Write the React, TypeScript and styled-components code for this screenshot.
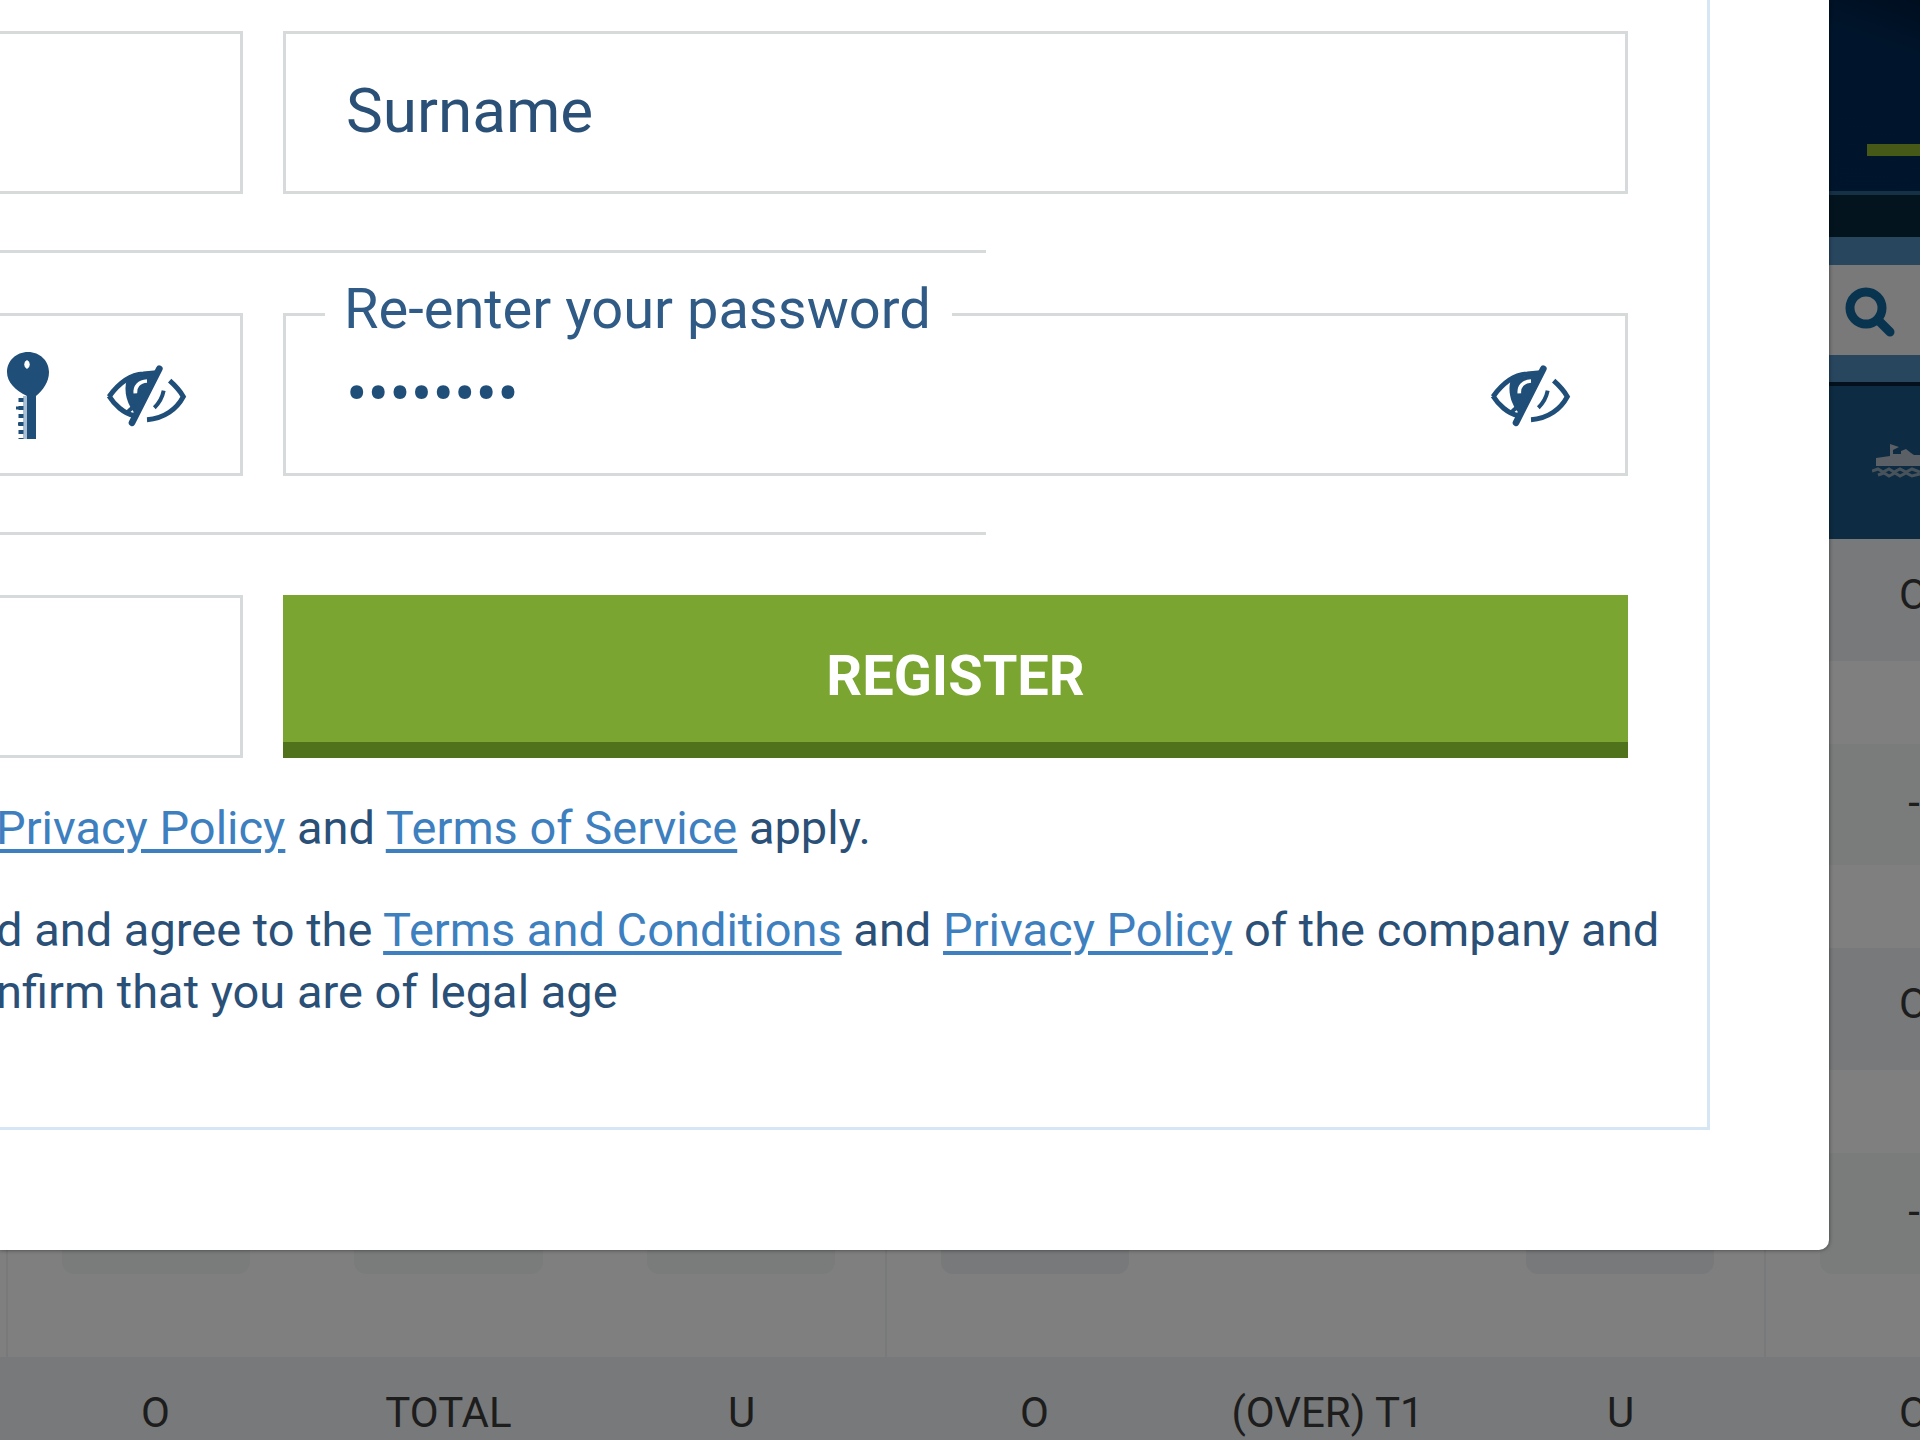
import React, { useState } from "react";
import styled, { createGlobalStyle } from "styled-components";

const color = {
  ink: "#1f4e79",
  body: "#2a5078",
  label: "#2f5b86",
  link: "#3d7fbf",
  line: "#d6dada",
  green: "#7ba531",
  greenDark: "#4f721b",
};

const GlobalStyle = createGlobalStyle`
  *, *::before, *::after { box-sizing: border-box; }
  body {
    margin: 0;
    font-family: Roboto, "Liberation Sans", sans-serif;
    background: #fff;
  }
`;

const Page = styled.div`
  position: relative;
  height: 100vh;
  overflow: hidden;
`;

/* ---------- site behind the dialog ---------- */

const Site = styled.div`
  display: flex;
  flex-direction: column;
`;

const Masthead = styled.header`
  display: flex;
  justify-content: flex-end;
  align-items: flex-end;
  height: 195px;
  padding-bottom: 35px;
  border-bottom: 4px solid #2c628c;
  background: linear-gradient(200deg, #001c40, #002b58 60px, #002d5a);
`;

const ActiveMark = styled.span`
  width: 53px;
  height: 12px;
  background: #8cb22c;
`;

const SubNav = styled.div`
  height: 42px;
  background: #08293f;
`;

const SearchBar = styled.div`
  display: flex;
  height: 149px;
  padding: 28px 0 27px;
  border-bottom: 4px solid #04233a;
  background: #508ebe;
`;

const SearchField = styled.div`
  flex: 1;
  display: flex;
  align-items: center;
  justify-content: flex-end;
  padding: 4px 24px 0 0;
  background: #f2f2f4;
`;

const Sports = styled.nav`
  display: flex;
  justify-content: flex-end;
  align-items: center;
  height: 153px;
  padding-bottom: 6px;
  background: #1a5685;
`;

const Odds = styled.table`
  width: 2058px;
  table-layout: fixed;
  border-collapse: collapse;
  background: #fff;
  color: #3a3a3a;
  font-size: 42px;
  line-height: 48px;
`;

const OddsHead = styled.th`
  height: 122px;
  padding: 0 0 10px 4px;
  background: #eef2f4;
  font-weight: 400;
  text-align: center;
  white-space: nowrap;
`;

const OddsCell = styled.td<{ $groupEnd?: boolean }>`
  height: 287px;
  padding: 0 50px 0 54px;
  border-right: ${(p) => (p.$groupEnd ? "2px solid #f0f3f4" : "0")};
  text-align: center;
`;

const Price = styled.span<{ $strong?: boolean }>`
  display: block;
  height: 121px;
  border-radius: 12px;
  background: ${(p) => (p.$strong ? "#eef2f4" : "#f4f8f9")};
  line-height: 118px;
`;

const Shade = styled.div`
  position: absolute;
  inset: 0;
  background: rgba(0, 0, 0, 0.5);
`;

/* ---------- registration dialog ---------- */

const Dialog = styled.section`
  position: absolute;
  top: 0;
  left: 0;
  right: 91px;
  padding: 0 119px 120px 0;
  border-bottom-right-radius: 10px;
  background: #fff;
  box-shadow: 0 0 4px rgba(0, 0, 0, 0.5);
`;

const Form = styled.form`
  display: flex;
  flex-direction: column;
  padding: 31px 79px 104px 0;
  border: solid #d6e6f4;
  border-width: 0 3px 3px 0;
`;

const Row = styled.div`
  display: grid;
  grid-template-columns: 243px 1fr;
  gap: 40px;
`;

const Divider = styled.hr`
  width: 100%;
  max-width: 986px;
  height: 3px;
  margin: 56px 0 60px;
  border: 0;
  background: ${color.line};
`;

const Field = styled.div<{ $cut?: boolean }>`
  position: relative;
  display: flex;
  align-items: center;
  min-width: 0;
  height: 163px;
  border: 3px solid ${color.line};
  border-left-width: ${(p) => (p.$cut ? "0" : "3px")};
  background: #fff;
`;

const Input = styled.input<{ $secret?: boolean }>`
  flex: 1;
  width: 100%;
  min-width: 0;
  height: 100%;
  padding: 0 0 ${(p) => (p.$secret ? "0" : "4px")} 60px;
  border: 0;
  outline: 0;
  background: transparent;
  color: ${color.ink};
  font: 400 ${(p) => (p.$secret ? "64px" : "62px")} / 72px Roboto, "Liberation Sans", sans-serif;
  &::placeholder {
    color: ${color.body};
    opacity: 1;
  }
`;

const FloatingLabel = styled.label`
  position: absolute;
  top: -39px;
  left: 39px;
  padding: 0 21px 0 19px;
  background: #fff;
  color: ${color.label};
  font-size: 56px;
  line-height: 64px;
  white-space: nowrap;
`;

const IconButton = styled.button`
  display: flex;
  flex: none;
  padding: 0;
  border: 0;
  background: none;
  color: ${color.ink};
  cursor: pointer;
`;

const FieldTools = styled.div<{ $lead?: boolean }>`
  display: flex;
  align-items: center;
  flex: none;
  gap: 56px;
  padding: 2px 54px 0 ${(p) => (p.$lead ? "7px" : "0")};
`;

const Submit = styled.button`
  height: 163px;
  padding: 15px 0 0;
  border: 0;
  border-bottom: 16px solid ${color.greenDark};
  background: ${color.green};
  color: #fff;
  font: 700 56px/64px Roboto, "Liberation Sans", sans-serif;
  cursor: pointer;
`;

const Legal = styled.div`
  display: flex;
  flex-direction: column;
  gap: 40px;
  margin: 39px -79px 0 -4px;
  color: ${color.body};
  font-size: 47px;
  line-height: 62px;
  white-space: nowrap;
`;

const Paragraph = styled.p`
  margin: 0;
`;

const Link = styled.a`
  color: ${color.link};
  text-decoration: underline;
  text-decoration-thickness: 4px;
  text-underline-offset: 5px;
`;

/* ---------- icons ---------- */

const EyeOff = () => (
  <svg width="82" height="62" viewBox="90 75 246 186" fill="none" stroke="currentColor" aria-hidden="true">
    <path d="M102 170C128 134 162 104 205 102L245 98" strokeWidth="15" />
    <path d="M102 168C118 194 146 220 178 227" strokeWidth="15" />
    <path d="M253 86L171 248" strokeWidth="20" strokeLinecap="round" />
    <path d="M156 116L244 100L186 226C156 198 144 154 156 116Z" fill="currentColor" stroke="none" />
    <path d="M158 216C164 210 172 204 178 196" strokeWidth="12" />
    <path d="M181 160C179 140 192 124 216 123" stroke="#fff" strokeWidth="11" />
    <path d="M266 152C262 172 252 190 238 203" strokeWidth="12" />
    <path d="M284 122C302 138 316 154 325 170C306 206 268 236 216 239" strokeWidth="15" />
  </svg>
);

const KeyIcon = () => (
  <svg width="42" height="88" viewBox="0 0 42 88" fill="currentColor" aria-hidden="true">
    <path
      fillRule="evenodd"
      d="M21 0C33 0 42 9 42 20C42 30 36 38 29 44V87H20V44C8 38 0 30 0 20C0 9 9 0 21 0ZM20 8A5 5 0 0 0 20 17A5 5 0 0 0 20 8Z"
    />
    <path d="M18 44V87" stroke="#a9c0d4" strokeWidth="4" />
    <path d="M14 46V87" stroke="currentColor" strokeWidth="5" strokeDasharray="4 4" />
    <path d="M9 56H14M11 72H14" stroke="currentColor" strokeWidth="3" />
  </svg>
);

const SearchIcon = () => (
  <svg width="51" height="51" viewBox="0 0 51 51" fill="none" stroke="#10689e" aria-hidden="true">
    <circle cx="21" cy="21" r="16" strokeWidth="9" />
    <path d="M33 33L45 45" strokeWidth="9" strokeLinecap="round" />
  </svg>
);

const ShipIcon = () => (
  <svg width="48" height="36" viewBox="0 0 48 36" fill="#b4c0ca" aria-hidden="true">
    <path d="M4 24V16L18 14V2L27 5L21 8V12H29V9L34 7L39 11L42 13H48V24Z" />
    <path
      d="M0 29L6 27L11 30L17 27L22 30L28 27L34 30L40 27L48 30M6 33L12 31L17 34L23 31L28 34L34 31L40 34L48 32"
      fill="none"
      stroke="#8fa5b6"
      strokeWidth="3"
    />
  </svg>
);

/* ---------- data ---------- */

type Slot = { text?: string; box?: "plain" | "strong" };
type Market = { heads: string[]; slots: Slot[] };

const lastOnly = (text: string): string[] => ["", "", "", "", "", "", text];
const lastBox: Slot[] = [{}, {}, {}, {}, {}, {}, { text: "-", box: "plain" }];

const markets: Market[] = [
  { heads: lastOnly("O"), slots: lastBox },
  {
    heads: lastOnly("O"),
    slots: [
      { box: "plain" },
      { box: "plain" },
      { box: "plain" },
      { box: "strong" },
      {},
      { box: "strong" },
      { text: "-", box: "plain" },
    ],
  },
  { heads: ["O", "TOTAL", "U", "O", "(OVER) T1", "U", "O"], slots: [] },
];

const GutterCol = styled.col`
  width: 7px;
`;

const GutterCell = styled(OddsCell)`
  padding: 0;
`;

const GutterHead = styled(OddsHead)`
  padding: 0;
`;

const OddsTable = () => (
  <Odds>
    <colgroup>
      <GutterCol />
    </colgroup>
    <tbody>
      {markets.map((market, m) => (
        <React.Fragment key={m}>
          <tr>
            <GutterHead as="td" />
            {market.heads.map((head, i) => (
              <OddsHead key={i} scope="col">
                {head}
              </OddsHead>
            ))}
          </tr>
          {market.slots.length > 0 && (
            <tr>
              <GutterCell $groupEnd />
              {market.slots.map((slot, i) => (
                <OddsCell key={i} $groupEnd={i % 3 === 2}>
                  {slot.box && <Price $strong={slot.box === "strong"}>{slot.text}</Price>}
                </OddsCell>
              ))}
            </tr>
          )}
        </React.Fragment>
      ))}
    </tbody>
  </Odds>
);

export default function App() {
  const [surname, setSurname] = useState("");
  const [repeat, setRepeat] = useState("password");
  const [visible, setVisible] = useState(false);

  return (
    <Page>
      <GlobalStyle />
      <Site>
        <Masthead>
          <ActiveMark />
        </Masthead>
        <SubNav />
        <SearchBar>
          <SearchField>
            <SearchIcon />
          </SearchField>
        </SearchBar>
        <Sports>
          <ShipIcon />
        </Sports>
        <OddsTable />
      </Site>
      <Shade />

      <Dialog role="dialog" aria-label="Register">
        <Form onSubmit={(e) => e.preventDefault()}>
          <Row>
            <Field $cut>
              <Input type="text" aria-label="Name" />
            </Field>
            <Field>
              <Input
                type="text"
                aria-label="Surname"
                placeholder="Surname"
                value={surname}
                onChange={(e) => setSurname(e.target.value)}
              />
            </Field>
          </Row>
          <Divider />
          <Row>
            <Field $cut>
              <FieldTools $lead>
                <IconButton type="button" aria-label="Generate password">
                  <KeyIcon />
                </IconButton>
                <IconButton type="button" aria-label="Show password">
                  <EyeOff />
                </IconButton>
              </FieldTools>
            </Field>
            <Field>
              <FloatingLabel htmlFor="repeat">Re-enter your password</FloatingLabel>
              <Input
                $secret
                id="repeat"
                type={visible ? "text" : "password"}
                value={repeat}
                onChange={(e) => setRepeat(e.target.value)}
              />
              <FieldTools>
                <IconButton type="button" aria-label="Show repeated password" onClick={() => setVisible(!visible)}>
                  <EyeOff />
                </IconButton>
              </FieldTools>
            </Field>
          </Row>
          <Divider />
          <Row>
            <Field $cut>
              <Input type="text" aria-label="Promo code" />
            </Field>
            <Submit type="submit">REGISTER</Submit>
          </Row>
          <Legal>
            <Paragraph>
              <Link href="#privacy">Privacy Policy</Link> and <Link href="#service">Terms of Service</Link> apply.
            </Paragraph>
            <Paragraph>
              d and agree to the <Link href="#terms">Terms and Conditions</Link> and{" "}
              <Link href="#privacy">Privacy Policy</Link> of the company and
              <br />
              nfirm that you are of legal age
            </Paragraph>
          </Legal>
        </Form>
      </Dialog>
    </Page>
  );
}
